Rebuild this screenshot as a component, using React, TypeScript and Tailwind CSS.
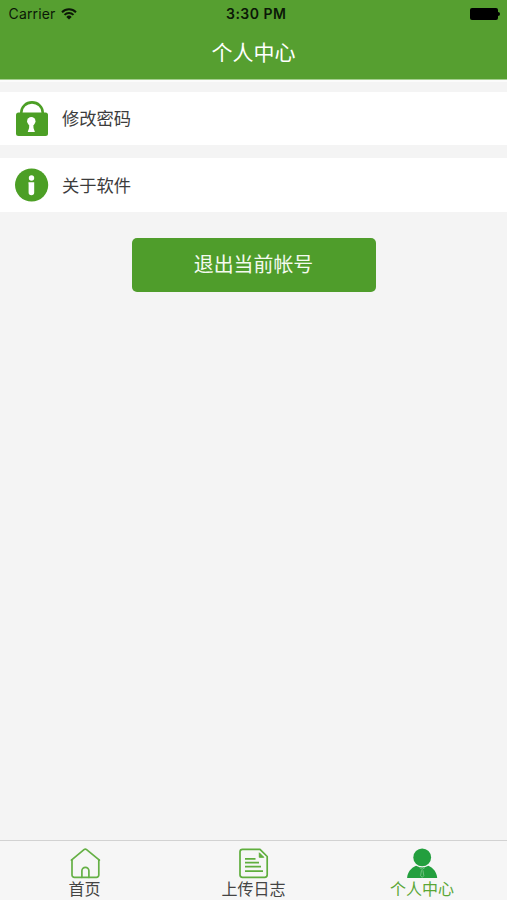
import React from "react";

const LockIcon = () => (
	<svg width="34" height="36" viewBox="0 0 34 36" fill="none">
		<path d="M6.3 13V11.4a10.7 10 0 0 1 21.4 0V13" stroke="#4c9f25" strokeWidth="2.6" />
		<rect x="1" y="11.5" width="32" height="23.5" rx="2.5" fill="#4c9f25" />
		<circle cx="16.3" cy="20.2" r="4.2" fill="#fff" />
		<path d="M14.3 21.5h4l.2 5.5 1.4 4h-7.2l1.4-4z" fill="#fff" />
	</svg>
);

const InfoIcon = () => (
	<svg width="34" height="34" viewBox="0 0 34 34">
		<circle cx="16.6" cy="17" r="16.6" fill="#4c9f25" />
		<circle cx="16.5" cy="10" r="2.7" fill="#fff" />
		<path d="M13.4 14.3h5.8v10.2a2.8 2.8 0 0 1-5.6 0V16.8z" fill="#fff" />
	</svg>
);

const HomeIcon = () => (
	<svg width="32" height="32" viewBox="0 0 32 32" fill="none" stroke="#65b045" strokeWidth="1.7" strokeLinejoin="round" strokeLinecap="round">
		<path d="M3 12.8V28a2.3 2.3 0 0 0 2.3 2.3h22.2A2.3 2.3 0 0 0 29.800 28V12.800" />
		<path d="M2.400 13.200 15 2.600q1.300-1 2.600 0L30.400 13.200" />
		<path d="M12.900 30.300v-6.500a3.500 3.500 0 0 1 7 0v6.500" />
	</svg>
);

const LogIcon = () => (
	<svg width="32" height="32" viewBox="0 0 32 32" fill="none" stroke="#5fae3d" strokeWidth="1.7" strokeLinejoin="round">
		<path d="M4.5 2.3h17.5l7.200 7.200v18.300a2.500 2.500 0 0 1-2.500 2.500H4.500a2.500 2.500 0 0 1-2.500-2.500V4.800A2.500 2.500 0 0 1 4.500 2.300z" />
		<path d="M21.3 5.8v4.5h4.5z" fill="#5fae3d" strokeWidth="1" />
		<path d="M7 11.9h10.5M7 15.700h14M7 19.700h16M7 24.200h18" />
	</svg>
);

const PersonIcon = () => (
	<svg width="32" height="32" viewBox="0 0 32 32" fill="#239f3e">
		<circle cx="16.2" cy="10.4" r="8.9" />
		<path d="M1.1 31c.5-5.800 3.700-9.800 8.900-12.200q6.200 3.400 12.400 0c5.200 2.400 8.300 6.400 8.800 12.200z" />
		<path d="M13.400 20.500l2.800 1.800 2.800-1.800M15.500 23.200l-.9 5.500 1.600 1.700 1.600-1.700-.9-5.500" fill="none" stroke="#8fcb9b" strokeWidth=".7" />
	</svg>
);

const WifiIcon = () => (
	<svg width="16" height="12" viewBox="0 0 16 12" fill="none" stroke="#0b1807" strokeWidth="2">
		<path d="M1 4.200a10 10 0 0 1 14 0M3.500 6.900a6.400 6.400 0 0 1 9 0" />
		<path d="M8 11.600 5.300 8.900a3.800 3.800 0 0 1 5.400 0z" fill="#0b1807" stroke="none" />
	</svg>
);

const rows = [
	{ label: "修改密码", icon: <LockIcon />, style: "h-[53px] mb-[13px]" },
	{ label: "关于软件", icon: <InfoIcon />, style: "h-[54px]" },
];

const tabs = [
	{ label: "首页", icon: <HomeIcon />, color: "text-[#444]" },
	{ label: "上传日志", icon: <LogIcon />, color: "text-[#444]" },
	{ label: "个人中心", icon: <PersonIcon />, color: "text-[#5aa636] pr-px" },
];

const App = () => {
	return (
		<div className="flex h-[900px] w-[507px] flex-col overflow-hidden bg-[#f4f4f4] font-['Inter','Noto_Sans_CJK_SC',sans-serif]">
			<header className="h-[80px] shrink-0 border-b border-[#a5cf90] bg-[#569f30]">
				<div className="grid h-[27px] grid-cols-3 items-center pl-[8.5px] pr-[7px] text-[#0b1807]">
					<div className="flex items-center gap-[6px] text-[14px] leading-none tracking-[0.15px]">
						Carrier
						<WifiIcon />
					</div>
					<div className="pl-[4px] text-center text-[14px] font-semibold leading-none tracking-[0.5px]">3:30 PM</div>
					<div className="flex items-center justify-end">
						<div className="h-[12px] w-[28px] rounded-[2px] bg-black" />
						<div className="h-[4px] w-[2px] rounded-r-full bg-black" />
					</div>
				</div>
				<h1 className="text-center text-[21px] leading-[52px] text-white">个人中心</h1>
			</header>

			<main className="flex-1 border-t-2 border-[#fbfbfb] pt-[10px]">
				{rows.map((row) => (
					<div key={row.label} className={`flex items-center bg-white pl-[15px] ${row.style}`}>
						{row.icon}
						<span className="ml-[13px] pt-px text-[17.3px] text-[#3c3c3c]">{row.label}</span>
					</div>
				))}
				<button className="ml-[132px] mt-[26px] block h-[54px] w-[244px] rounded-[5px] bg-[#4f9d2b] pr-[1px] pt-[2px] text-[19.9px] text-[#f4faef]">
					退出当前帐号
				</button>
			</main>

			<nav className="grid h-[60px] grid-cols-3 border-t border-[#d2d2d2] bg-[#f6f6f6]">
				{tabs.map((tab) => (
					<div key={tab.label} className={`flex flex-col items-center pt-[6px] ${tab.color}`}>
						{tab.icon}
						<span className="text-[16px] leading-[20px]">{tab.label}</span>
					</div>
				))}
			</nav>
		</div>
	);
};

export default App;
